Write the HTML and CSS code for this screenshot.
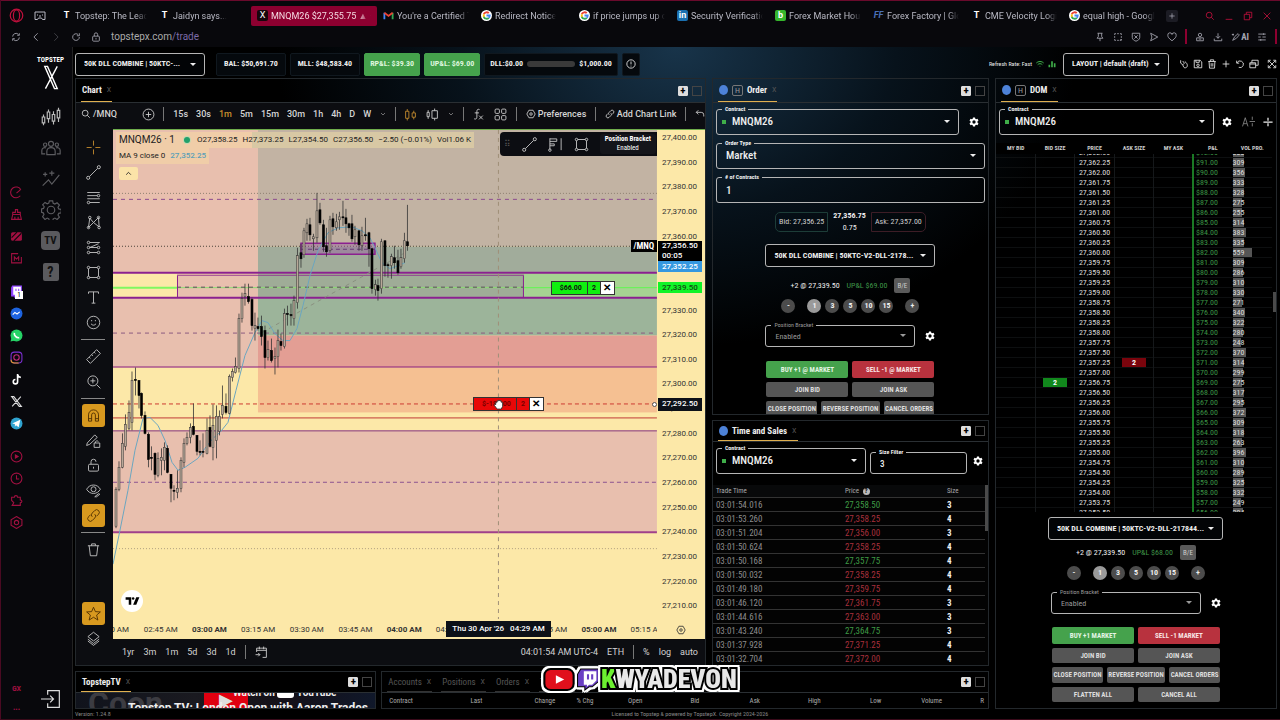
FILE: index.html
```html
<!DOCTYPE html>
<html lang="en">

<head>
    <meta charset="UTF-8">
    <meta name="viewport" content="width=device-width, initial-scale=1.0">
    <title>MNQM26 $27,355.75</title>
    <link rel="stylesheet" href="styles.css">
</head>

<body>
    <!-- icon sprite -->
    <svg class="sprite" xmlns="http://www.w3.org/2000/svg">
        <symbol id="i-opera" viewBox="0 0 24 24"><circle cx="12" cy="12" r="10"/><ellipse cx="12" cy="12" rx="5" ry="9"/></symbol>
        <symbol id="i-island" viewBox="0 0 24 24"><path d="M2 4h20v15h-5l-2-3h-6l-2 3H2z"/><path d="M7 9v2M17 9v2M10 12h4"/></symbol>
        <symbol id="i-search" viewBox="0 0 24 24"><circle cx="10" cy="10" r="7"/><path d="M15 15l6 6"/></symbol>
        <symbol id="i-min" viewBox="0 0 24 24"><path d="M4 20h16"/></symbol>
        <symbol id="i-restore" viewBox="0 0 24 24"><path d="M3 8h13v13H3zM8 8V3h13v13h-5"/></symbol>
        <symbol id="i-x" viewBox="0 0 24 24"><path d="M4 4l16 16M20 4L4 20"/></symbol>
        <symbol id="i-plus" viewBox="0 0 24 24"><path d="M12 4v16M4 12h16"/></symbol>
        <symbol id="i-pluscircle" viewBox="0 0 24 24"><circle cx="12" cy="12" r="10"/><path d="M12 7v10M7 12h10"/></symbol>
        <symbol id="i-sync" viewBox="0 0 24 24"><path d="M4 11a8 8 0 0 1 14-5M20 3v5h-5M20 13a8 8 0 0 1-14 5M4 21v-5h5"/></symbol>
        <symbol id="i-left" viewBox="0 0 24 24"><path d="M16 3l-9 9 9 9"/></symbol>
        <symbol id="i-right" viewBox="0 0 24 24"><path d="M8 3l9 9-9 9"/></symbol>
        <symbol id="i-down" viewBox="0 0 24 24"><path d="M4 8l8 8 8-8"/></symbol>
        <symbol id="i-up" viewBox="0 0 24 24"><path d="M4 16l8-8 8 8"/></symbol>
        <symbol id="i-reload" viewBox="0 0 24 24"><path d="M20 12a8 8 0 1 1-3-6M20 3v6h-6"/></symbol>
        <symbol id="i-undo" viewBox="0 0 24 24"><path d="M4 4v6h6M5 9a8 8 0 1 1 4 11"/></symbol>
        <symbol id="i-back" viewBox="0 0 24 24"><path d="M8 3L3 8l5 5M3 8h12a6 6 0 0 1 6 6v4"/></symbol>
        <symbol id="i-padlock" viewBox="0 0 24 24"><rect x="4" y="10" width="16" height="12" rx="2"/><path d="M8 10V6a4 4 0 0 1 8 0v4M12 14v4"/></symbol>
        <symbol id="i-unlock" viewBox="0 0 24 24"><rect x="4" y="10" width="16" height="11" rx="2"/><path d="M8 10V6a4 4 0 0 1 8 0M12 14v3"/></symbol>
        <symbol id="i-pin" viewBox="0 0 24 24"><path d="M6 3h12M8 3v8l-3 4h14l-3-4V3M12 15v7"/></symbol>
        <symbol id="i-snap" viewBox="0 0 24 24"><path d="M4 7V4h3M10 4h4M17 4h3v3M20 10v4M4 10v4M4 17v3h3M10 20h4M20 17v3h-3z"/></symbol>
        <symbol id="i-shield" viewBox="0 0 24 24"><path d="M3 3h18v10c0 5-5 8-9 9-4-1-9-4-9-9zM8 8l8 8M16 8l-8 8"/></symbol>
        <symbol id="i-send" viewBox="0 0 24 24"><path d="M4 3l17 9-17 9 3-9z"/></symbol>
        <symbol id="i-heart" viewBox="0 0 24 24"><path d="M12 21C4 15 2 12 2 8a5 5 0 0 1 10-2 5 5 0 0 1 10 2c0 4-2 7-10 13z"/></symbol>
        <symbol id="i-user" viewBox="0 0 24 24"><circle cx="12" cy="7" r="4"/><path d="M4 14h16v7H4zM9 17h6"/></symbol>
        <symbol id="i-download" viewBox="0 0 24 24"><path d="M12 3v12M7 10l5 5 5-5M3 16v5h18v-5"/></symbol>
        <symbol id="i-spark" viewBox="0 0 24 24"><path d="M4 20l5-9 8-7 3 3-7 8zM5 4v5M2 6h5"/></symbol>
        <symbol id="i-sliders" viewBox="0 0 24 24"><path d="M3 5h18M3 12h6M13 12h8M3 19h18M16 3v4M9 17v4"/></symbol>
        <symbol id="i-speed" viewBox="0 0 24 24"><path d="M19 18a10 10 0 1 1 1-11M12 13l7-6"/></symbol>
        <symbol id="i-broom" viewBox="0 0 24 24"><path d="M10 3h4v5h5v4H5V8h5zM5 12l-2 9h18l-2-9M9 16v5M15 16v5"/></symbol>
        <symbol id="i-stripes" viewBox="0 0 24 24"><rect x="2" y="4" width="20" height="16" rx="3" fill="currentColor" stroke="none"/><path stroke="#08080c" d="M3 14L13 4M7 20L21 6"/></symbol>
        <symbol id="i-music" viewBox="0 0 24 24"><path d="M21 9v11H3V3h12M8 16V9l4 4 4-4v7"/></symbol>
        <symbol id="i-twitch" viewBox="0 0 24 24"><path fill="#9146ff" stroke="none" d="M4 1h18v14l-6 6h-4l-4 3v-3H2V5z"/><path fill="#fff" stroke="none" d="M6 3h14v11l-4 4h-4l-3 2v-2H6z"/><path stroke="#9146ff" d="M11 7v6M16 7v6"/></symbol>
        <symbol id="i-messenger" viewBox="0 0 24 24"><circle cx="12" cy="12" r="11" fill="#1d63e0" stroke="none"/><path stroke="#fff" d="M5 14l4-4 4 3 5-4"/></symbol>
        <symbol id="i-whatsapp" viewBox="0 0 24 24"><circle cx="12" cy="12" r="11" fill="#25d366" stroke="none"/><path fill="#25d366" stroke="none" d="M1 23l2-8 6 6z"/><path stroke="#fff" stroke-width="3" d="M8 7c-1 5 4 10 9 9"/></symbol>
        <symbol id="i-insta" viewBox="0 0 24 24"><rect x="2" y="2" width="20" height="20" rx="6" stroke="#7b2fd0"/><path d="M2 16c0 4 2 6 6 6h8" stroke="#e8a020"/><circle cx="12" cy="12" r="5" stroke="#c32a7e"/></symbol>
        <symbol id="i-tiktok" viewBox="0 0 24 24"><path stroke="#fff" stroke-width="3" d="M14 2v14a4 4 0 1 1-4-4M14 3c1 4 3 5 6 5"/></symbol>
        <symbol id="i-xsoc" viewBox="0 0 24 24"><path d="M3 3h4l14 18h-4zM20 3L4 21"/></symbol>
        <symbol id="i-telegram" viewBox="0 0 24 24"><circle cx="12" cy="12" r="11" fill="#2fa3d0" stroke="none"/><path fill="#fff" stroke="none" d="M4 12l15-7-3 14-5-4-2 3v-5z"/></symbol>
        <symbol id="i-play" viewBox="0 0 24 24"><circle cx="12" cy="12" r="10"/><path fill="currentColor" d="M10 9l5 3-5 3z"/></symbol>
        <symbol id="i-clock" viewBox="0 0 24 24"><circle cx="12" cy="12" r="10"/><path d="M12 6v7h5"/></symbol>
        <symbol id="i-puzzle" viewBox="0 0 24 24"><path d="M3 6h5c0-4 6-4 6 0h5v5c4 0 4 5 0 5v5H4l3-5-4-4z"/></symbol>
        <symbol id="i-hex" viewBox="0 0 24 24"><path d="M12 1l10 6v10l-10 6-10-6V7z"/><circle cx="12" cy="12" r="4"/></symbol>
        <symbol id="i-nut" viewBox="0 0 24 24"><path d="M7 3h10l5 9-5 9H7l-5-9z"/><circle cx="12" cy="12" r="3"/></symbol>
        <symbol id="i-candles" viewBox="0 0 24 24"><path d="M3 9v3M1.500 12h3v7h-3zM3 19v3M9 3v3M7.500 6h3v8h-3zM9 14v5M15 5v4M13.500 9h3v8h-3zM15 17v4M21 1v3M19.500 4h3v9h-3zM21 13v5"/></symbol>
        <symbol id="i-people" viewBox="0 0 24 24"><circle cx="12" cy="7" r="3"/><circle cx="5" cy="8" r="2"/><circle cx="19" cy="8" r="2"/><path d="M7 20v-4c0-6 10-6 10 0v4zM5 19H1v-4c0-3 3-4 5-3M19 19h4v-4c0-3-3-4-5-3"/></symbol>
        <symbol id="i-insights" viewBox="0 0 24 24"><path d="M2 20l7-7 4 5 9-11M5 4v5M2.500 6.500h5M13 2v6M10 5h6"/></symbol>
        <symbol id="i-cog" viewBox="0 0 24 24"><path d="M10 1h4l.6 3 2 .9 2.700-1.600 2.800 2.800-1.700 2.600.9 2 3 .7v4l-3 .6-.9 2 1.700 2.600-2.800 2.800-2.600-1.700-2 .9-.7 3h-4l-.6-3-2-.9-2.600 1.700L1.900 20l1.700-2.600-.9-2-2-.6v-4l2.300-.7.9-2L2 5.700l2.800-2.800 2.600 1.700 2-.9z"/><circle cx="12" cy="12" r="4.500"/></symbol>
        <symbol id="i-gear" viewBox="0 0 24 24"><path fill="currentColor" stroke="none" fill-rule="evenodd" d="M9.500 1h5l.6 3.300 2 1.200 3.200-1.200 2.500 4.300-2.600 2.200v2.400l2.600 2.200-2.500 4.300-3.200-1.200-2 1.200-.6 3.300h-5l-.6-3.300-2-1.200-3.200 1.200-2.500-4.300 2.600-2.200v-2.400L1.200 8.600l2.500-4.300 3.200 1.200 2-1.200zM12 8a4 4 0 1 0 0 8 4 4 0 0 0 0-8z"/></symbol>
        <symbol id="i-exit" viewBox="0 0 24 24"><path d="M8 7V2h14v20H8v-5M0 12h15M11 8l4 4-4 4"/></symbol>
        <symbol id="i-info" viewBox="0 0 24 24"><circle cx="12" cy="12" r="10"/><path d="M12 6v7M12 16v2"/></symbol>
        <symbol id="i-wifi" viewBox="0 0 24 24"><path stroke-width="3" d="M1 9c6-6 16-6 22 0M5 14c4-4 10-4 14 0M11 19h2"/></symbol>
        <symbol id="i-bars" viewBox="0 0 24 24"><path stroke-width="5" d="M4 22v-8M12 22V4M20 22V10"/></symbol>
        <symbol id="i-plug" viewBox="0 0 24 24"><path d="M4 3v7l5 4 4-4-4-5M9 14l2 5c2 4 9 2 9-3 0-4-2-7-6-10"/></symbol>
        <symbol id="i-save" viewBox="0 0 24 24"><path d="M3 3h14l4 4v14H3zM7 3v5h8V3"/><circle cx="12" cy="15" r="3"/></symbol>
        <symbol id="i-trash" viewBox="0 0 24 24"><path d="M3 6h18M8 6V2h8v4M5 6l1 16h12l1-16M10 10v8M14 10v8"/></symbol>
        <symbol id="i-windows" viewBox="0 0 24 24"><path d="M2 9h14v12H2zM2 12h14M7 9V3h15v12h-6"/></symbol>
        <symbol id="i-expand" viewBox="0 0 24 24"><path d="M3 9V3h6M15 3h6v6M21 15v6h-6M9 21H3v-6M4 4l16 16M20 4L4 20"/></symbol>
        <symbol id="i-candle1" viewBox="0 0 24 24"><path d="M3 6h6v13H3zM6 2v4M6 19v4M15 9h6v8h-6zM18 5v4M18 17v4"/></symbol>
        <symbol id="i-candle2" viewBox="0 0 24 24"><path d="M2 8h4v8H2zM4 4v4M4 16v4M11 5h10v14H11zM16 1v4M16 19v4"/></symbol>
        <symbol id="i-fx" viewBox="0 0 24 24"><path d="M14 3c-4-2-5 1-5 4v10c0 3-2 4-5 3M5 9h8M13 14l7 7M20 14l-7 7"/></symbol>
        <symbol id="i-grid" viewBox="0 0 24 24"><rect x="2" y="2" width="8" height="8" rx="2"/><rect x="14" y="2" width="8" height="8" rx="2"/><rect x="2" y="14" width="8" height="8" rx="2"/><rect x="14" y="14" width="8" height="8" rx="2"/></symbol>
        <symbol id="i-link" viewBox="0 0 24 24"><path d="M10 14a4 4 0 0 1 0-6l4-4a4 4 0 0 1 6 6l-3 3M14 10a4 4 0 0 1 0 6l-4 4a4 4 0 0 1-6-6l3-3"/></symbol>
        <symbol id="i-cross" viewBox="0 0 24 24"><path d="M12 1v8M12 15v8M1 12h8M15 12h8"/></symbol>
        <symbol id="i-trend" viewBox="0 0 24 24"><circle cx="3.500" cy="20.500" r="2.500"/><circle cx="20.500" cy="3.500" r="2.500"/><path d="M5.500 18.500l13-13"/></symbol>
        <symbol id="i-fib" viewBox="0 0 24 24"><path d="M2 4h20M2 9h16M2 14h20M6 20h16"/><circle cx="20" cy="9" r="2"/><circle cx="4" cy="20" r="2"/></symbol>
        <symbol id="i-pattern" viewBox="0 0 24 24"><path d="M4 20L6 5l6 7 8-8 1 15-9-7-8 8"/><circle cx="4" cy="20" r="2"/><circle cx="6" cy="4" r="2"/><circle cx="20" cy="4" r="2"/><circle cx="21" cy="20" r="2"/></symbol>
        <symbol id="i-forecast" viewBox="0 0 24 24"><path d="M6 4h16M6 12h12M6 20h12M6 12l14-6"/><circle cx="4" cy="4" r="2"/><circle cx="4" cy="12" r="2"/><circle cx="4" cy="20" r="2"/><circle cx="20" cy="12" r="2"/><circle cx="20" cy="20" r="2"/></symbol>
        <symbol id="i-rect" viewBox="0 0 24 24"><path d="M4 6v12M20 6v12M6 4h12M6 20h12"/><circle cx="4" cy="4" r="2"/><circle cx="20" cy="4" r="2"/><circle cx="4" cy="20" r="2"/><circle cx="20" cy="20" r="2"/></symbol>
        <symbol id="i-text" viewBox="0 0 24 24"><path d="M4 6V3h16v3M12 3v18M9 21h6"/></symbol>
        <symbol id="i-smile" viewBox="0 0 24 24"><circle cx="12" cy="12" r="10"/><path d="M9 8v2M15 8v2M8 14c2 3 6 3 8 0"/></symbol>
        <symbol id="i-ruler" viewBox="0 0 24 24"><path d="M1 17L17 1l6 6L7 23zM5 13l2 2M9 9l2 2M13 5l2 2"/></symbol>
        <symbol id="i-zoom" viewBox="0 0 24 24"><circle cx="11" cy="11" r="8"/><path d="M17 17l6 6M11 7v8M7 11h8"/></symbol>
        <symbol id="i-magnet" viewBox="0 0 24 24"><path d="M4 21V11a8 8 0 0 1 16 0v10h-5V11a3 3 0 0 0-6 0v10zM4 17h5M15 17h5"/></symbol>
        <symbol id="i-penlock" viewBox="0 0 24 24"><path d="M2 16L14 3l4 4L6 18l-5 2zM15 16v-2a3 3 0 0 1 5 0M13 16h9v7h-9z"/></symbol>
        <symbol id="i-eye" viewBox="0 0 24 24"><path d="M1 10c5-9 17-9 22 0-5 9-17 9-22 0z"/><circle cx="12" cy="10" r="4"/><path d="M14 22l6-5 2 1-5 4z"/></symbol>
        <symbol id="i-bin" viewBox="0 0 24 24"><path d="M3 6h18M9 6V3h6v3M5 6l2 16h10l2-16"/></symbol>
        <symbol id="i-star" viewBox="0 0 24 24"><path d="M12 2l3 7 8 .5-6 5 2 8-7-4.500-7 4.500 2-8-6-5L9 9z"/></symbol>
        <symbol id="i-layers" viewBox="0 0 24 24"><path d="M12 2l9 7-9 7-9-7zM3 13l9 7 9-7M3 16l9 7 9-7"/></symbol>
        <symbol id="i-vp" viewBox="0 0 24 24"><path d="M3 2v18M3 3h11v4H3M3 11h7v3H3M21 2v19"/><circle cx="3" cy="21" r="2"/></symbol>
        <symbol id="i-calendar" viewBox="0 0 24 24"><path d="M3 11V4h18v17h-7M3 8h18M8 1v5M16 1v5M1 16h8M6 13l3 3-3 3"/></symbol>
        <symbol id="i-font" viewBox="0 0 24 24"><path d="M1 21L6 5l5 16M3 16h6M14 12h10M19 3v6M19 15v6"/></symbol>
        <symbol id="i-center" viewBox="0 0 24 24"><path stroke-width="3" d="M1 12h22M12 2v7M12 15v7"/></symbol>
        <symbol id="i-google" viewBox="0 0 24 24"><circle cx="12" cy="12" r="12" fill="#fff" stroke="none"/><path stroke="#ea4335" stroke-width="4" d="M6 9c2-5 8-5 11-2"/><path stroke="#fbbc05" stroke-width="4" d="M6 9v6"/><path stroke="#34a853" stroke-width="4" d="M6 15c2 5 8 5 11 2"/><path stroke="#4285f4" stroke-width="4" d="M12 12h7c0 3-1 4-2 5"/></symbol>
        <symbol id="i-gmail" viewBox="0 0 24 24"><path stroke="#4285f4" stroke-width="4" d="M3 20V6"/><path stroke="#34a853" stroke-width="4" d="M21 20V6"/><path stroke="#ea4335" stroke-width="4" d="M3 6l9 7 9-7"/></symbol>
    </svg>

    <div class="browser">
        <!-- tab strip -->
        <header class="tabstrip">
            <svg class="icon red"><use href="#i-opera"/></svg>
            <svg class="icon island"><use href="#i-island"/></svg>
            <nav class="tabs" aria-label="Tabs">
                <a href="#" class="tab"><span class="fav">T</span><span class="tab-title">Topstep: The Leading</span></a>
                <a href="#" class="tab"><span class="fav">T</span><span class="tab-title">Jaidyn says...</span></a>
                <a href="#" class="tab active"><span class="fav">X</span><span class="tab-title">MNQM26 $27,355.75 ▲ +</span></a>
                <a href="#" class="tab"><svg class="fav"><use href="#i-gmail"/></svg><span class="tab-title">You're a Certified Tr</span></a>
                <a href="#" class="tab"><svg class="fav"><use href="#i-google"/></svg><span class="tab-title">Redirect Notice</span></a>
                <a href="#" class="tab"><svg class="fav"><use href="#i-google"/></svg><span class="tab-title">if price jumps up do</span></a>
                <a href="#" class="tab"><span class="fav in">in</span><span class="tab-title">Security Verification</span></a>
                <a href="#" class="tab"><span class="fav bb">b</span><span class="tab-title">Forex Market Hours</span></a>
                <a href="#" class="tab"><span class="fav ff">FF</span><span class="tab-title">Forex Factory | Glob</span></a>
                <a href="#" class="tab"><span class="fav">T</span><span class="tab-title">CME Velocity Logic</span></a>
                <a href="#" class="tab"><svg class="fav"><use href="#i-google"/></svg><span class="tab-title">equal high - Google</span></a>
            </nav>
            <button class="newtab" aria-label="New tab"><svg class="icon"><use href="#i-plus"/></svg></button>
            <div class="window-buttons">
                <svg class="icon"><use href="#i-search"/></svg>
                <svg class="icon"><use href="#i-min"/></svg>
                <svg class="icon"><use href="#i-restore"/></svg>
                <svg class="icon"><use href="#i-x"/></svg>
            </div>
        </header>

        <!-- address bar -->
        <div class="addressbar">
            <svg class="icon"><use href="#i-sync"/></svg>
            <svg class="icon"><use href="#i-left"/></svg>
            <svg class="icon dim"><use href="#i-right"/></svg>
            <svg class="icon"><use href="#i-reload"/></svg>
            <svg class="icon"><use href="#i-padlock"/></svg>
            <span class="url">topstepx.com<b>/trade</b></span>
            <div class="address-icons">
                <svg class="icon"><use href="#i-pin"/></svg>
                <svg class="icon"><use href="#i-snap"/></svg>
                <svg class="icon"><use href="#i-shield"/></svg>
                <svg class="icon"><use href="#i-send"/></svg>
                <svg class="icon"><use href="#i-heart"/></svg>
                <i class="redbar"></i>
                <svg class="icon"><use href="#i-user"/></svg>
                <svg class="icon"><use href="#i-download"/></svg>
                <span class="ai"><svg class="icon"><use href="#i-spark"/></svg>AI</span>
                <svg class="icon"><use href="#i-sliders"/></svg>
                <i class="redbar"></i>
            </div>
        </div>

        <div class="content">
            <!-- browser sidebar -->
            <aside class="gx-bar">
                <svg class="icon"><use href="#i-speed"/></svg>
                <svg class="icon"><use href="#i-broom"/></svg>
                <svg class="icon"><use href="#i-stripes"/></svg>
                <svg class="icon"><use href="#i-music"/></svg>
                <div class="gx-group">
                    <span class="gx-badge-wrap"><svg class="icon"><use href="#i-twitch"/></svg><span class="gx-badge">1</span></span>
                    <svg class="icon"><use href="#i-messenger"/></svg>
                    <svg class="icon"><use href="#i-whatsapp"/></svg>
                    <svg class="icon"><use href="#i-insta"/></svg>
                    <svg class="icon"><use href="#i-tiktok"/></svg>
                    <svg class="icon white"><use href="#i-xsoc"/></svg>
                    <svg class="icon"><use href="#i-telegram"/></svg>
                </div>
                <div class="gx-group">
                    <svg class="icon"><use href="#i-play"/></svg>
                    <svg class="icon"><use href="#i-clock"/></svg>
                    <svg class="icon"><use href="#i-puzzle"/></svg>
                    <svg class="icon"><use href="#i-hex"/></svg>
                </div>
                <span class="gx-label">GX</span>
                <span class="gx-dots">•••</span>
            </aside>

            <!-- app navigation -->
            <nav class="app-nav" aria-label="Main">
                <div class="logo">TOPSTEP
                    <svg viewBox="0 0 24 36"><path d="M3 2h4l14 32h-4zM21 2L4 34"/></svg>
                </div>
                <svg class="nav-icon on"><use href="#i-candles"/></svg>
                <svg class="nav-icon"><use href="#i-people"/></svg>
                <svg class="nav-icon"><use href="#i-insights"/></svg>
                <svg class="nav-icon"><use href="#i-cog"/></svg>
                <span class="nav-box">TV</span>
                <span class="nav-box help">?</span>
                <svg class="nav-icon exit"><use href="#i-exit"/></svg>
            </nav>

            <div class="app">
                <div class="account-bar">
                    <span class="select-box account">
                        <select aria-label="Account"><option>50K DLL COMBINE | 50KTC-...</option></select>
                    </span>
                    <span class="stat">BAL: $50,691.70</span>
                    <span class="stat">MLL: $48,583.40</span>
                    <span class="stat green">RP&amp;L: $39.30</span>
                    <span class="stat green">UP&amp;L: $69.00</span>
                    <span class="stat dll">DLL:$0.00 <i class="meter"></i> $1,000.00</span>
                    <span class="stat info"><svg class="icon"><use href="#i-info"/></svg></span>
                    <div class="layout-tools">
                        <span class="refresh">Refresh Rate: Fast</span>
                        <svg class="icon go"><use href="#i-wifi"/></svg>
                        <svg class="icon go"><use href="#i-bars"/></svg>
                        <span class="select-box layout">
                            <select aria-label="Layout"><option>LAYOUT | default (draft)</option></select>
                        </span>
                        <svg class="icon"><use href="#i-plug"/></svg>
                        <svg class="icon"><use href="#i-save"/></svg>
                        <svg class="icon"><use href="#i-trash"/></svg>
                        <svg class="icon"><use href="#i-plus"/></svg>
                        <svg class="icon"><use href="#i-undo"/></svg>
                        <svg class="icon"><use href="#i-windows"/></svg>
                        <svg class="icon expand"><use href="#i-expand"/></svg>
                    </div>
                </div>

                <main class="workspace">
                    <div class="left-area">
                        <div class="top-row">
                            <!-- chart panel -->
                            <section class="panel chart-panel">
                                <div class="panel-head">
                                    <span class="panel-tab">Chart <i>X</i></span>
                                    <button class="add" aria-label="Add">+</button><button class="max" aria-label="Maximize"></button>
                                </div>
                                <div class="chart-toolbar">
                                    <button class="tool symbol"><svg class="icon"><use href="#i-search"/></svg>/MNQ</button>
                                    <svg class="icon big"><use href="#i-pluscircle"/></svg>
                                    <i class="vline"></i>
                                    <div class="intervals">
                                        <span>15s</span><span>30s</span><span class="gold">1m</span><span>5m</span><span>15m</span><span>30m</span><span>1h</span><span>4h</span><span>D</span><span>W</span>
                                    </div>
                                    <svg class="icon tiny"><use href="#i-down"/></svg>
                                    <i class="vline"></i>
                                    <svg class="icon big gold"><use href="#i-candle1"/></svg>
                                    <svg class="icon big"><use href="#i-candle2"/></svg>
                                    <svg class="icon tiny"><use href="#i-down"/></svg>
                                    <i class="vline"></i>
                                    <svg class="icon big"><use href="#i-fx"/></svg>
                                    <svg class="icon big"><use href="#i-grid"/></svg>
                                    <i class="vline"></i>
                                    <button class="tool"><svg class="icon"><use href="#i-nut"/></svg>Preferences</button>
                                    <i class="vline"></i>
                                    <button class="tool"><svg class="icon"><use href="#i-link"/></svg>Add Chart Link</button>
                                    <i class="vline"></i>
                                    <svg class="icon"><use href="#i-back"/></svg>
                                </div>
                                <div class="chart-body">
                                    <div class="draw-tools">
                                        <svg class="gold"><use href="#i-cross"/></svg>
                                        <svg><use href="#i-trend"/></svg>
                                        <svg><use href="#i-fib"/></svg>
                                        <svg><use href="#i-pattern"/></svg>
                                        <svg><use href="#i-forecast"/></svg>
                                        <svg><use href="#i-rect"/></svg>
                                        <svg><use href="#i-text"/></svg>
                                        <svg><use href="#i-smile"/></svg>
                                        <hr>
                                        <svg><use href="#i-ruler"/></svg>
                                        <svg><use href="#i-zoom"/></svg>
                                        <hr>
                                        <svg class="filled"><use href="#i-magnet"/></svg>
                                        <svg><use href="#i-penlock"/></svg>
                                        <svg><use href="#i-unlock"/></svg>
                                        <svg><use href="#i-eye"/></svg>
                                        <svg class="filled"><use href="#i-link"/></svg>
                                        <hr>
                                        <svg><use href="#i-bin"/></svg>
                                        <svg class="filled bottom"><use href="#i-star"/></svg>
                                        <svg><use href="#i-layers"/></svg>
                                    </div>
                                    <div class="chart-main">
                                        <div class="chart-view">
                                            <div class="plot">
                                                <svg id="plot" viewBox="113 129 544 490" preserveAspectRatio="none"></svg>
                                                <div class="legend">
                                                    <div class="legend-row"><span class="sym">MNQM26 · 1</span><i class="dot"></i><span>O27,358.25</span><span>H27,373.25</span><span>L27,354.50</span><span>C27,356.50</span><span>−2.50 (−0.01%)</span><span>Vol1.06 K</span></div>
                                                    <div class="legend-row">MA 9 close 0 <b>27,352.25</b></div>
                                                    <button class="collapse" aria-label="Collapse"><svg class="icon"><use href="#i-up"/></svg></button>
                                                </div>
                                                <div class="float-bar">
                                                    <span class="grip">⠿</span>
                                                    <svg><use href="#i-trend"/></svg>
                                                    <svg><use href="#i-vp"/></svg>
                                                    <svg><use href="#i-rect"/></svg>
                                                    <span class="tip">Position Bracket<br><small>Enabled</small></span>
                                                </div>
                                                <span class="sym-tag">/MNQ</span>
                                                <div class="pos-tag win"><span>$66.00</span><span>2</span><button aria-label="Close position">✕</button></div>
                                                <div class="pos-tag loss"><span>$-188.00</span><span>2</span><button aria-label="Cancel stop">✕</button></div>
                                                <svg class="hand" viewBox="0 0 24 24"><path d="M6 12V7h3V4h3V3h3v1h3v3h3v9l-3 6H9l-6-8 1-2z"/></svg>
                                                <span class="ring"></span>
                                                <span class="tv-mark">
                                                    <svg viewBox="0 0 24 16"><path d="M1 2h9v12H6V6H1zM18 2h5l-5 12h-5z"/><circle cx="13" cy="4" r="2"/></svg>
                                                </span>
                                            </div>
                                            <div class="price-axis" id="price-axis">
                                                <span class="price-tag black">27,356.50<br>00:05</span>
                                                <span class="price-tag blue">27,352.25</span>
                                                <span class="price-tag lime">27,339.50</span>
                                                <span class="price-tag cross">27,292.50</span>
                                            </div>
                                        </div>
                                        <div class="time-axis">
                                            <div class="times" id="times"></div>
                                            <span class="time-tag">Thu 30 Apr '26 &nbsp; 04:29 AM</span>
                                            <svg class="icon"><use href="#i-nut"/></svg>
                                        </div>
                                        <div class="range-bar">
                                            <span>1yr</span><span>3m</span><span>1m</span><span>5d</span><span>3d</span><span>1d</span>
                                            <i class="vline"></i>
                                            <svg class="icon big"><use href="#i-calendar"/></svg>
                                            <span class="clock">04:01:54 AM UTC-4</span><span>ETH</span>
                                            <i class="vline"></i>
                                            <span>%</span><span>log</span><span>auto</span>
                                        </div>
                                    </div>
                                </div>
                            </section>

                            <div class="mid-col">
                                <!-- order entry -->
                                <section class="panel order-panel">
                                    <div class="panel-head">
                                        <span class="panel-tab"><i class="ball"></i><em>H</em>Order <i>X</i></span>
                                        <button class="add" aria-label="Add">+</button><button class="max" aria-label="Maximize"></button>
                                    </div>
                                    <div class="form">
                                        <div class="form-row">
                                            <fieldset class="field drop live"><legend><label for="o-contract">Contract</label></legend><select id="o-contract"><option>MNQM26</option></select></fieldset>
                                            <svg class="gear"><use href="#i-gear"/></svg>
                                        </div>
                                        <fieldset class="field drop"><legend><label for="o-type">Order Type</label></legend><select id="o-type"><option>Market</option></select></fieldset>
                                        <fieldset class="field"><legend><label for="o-qty"># of Contracts</label></legend><input id="o-qty" type="text" value="1"></fieldset>
                                        <div class="quote">
                                            <span class="bid">Bid: 27,356.25</span>
                                            <span class="last"><b>27,356.75</b>0.75</span>
                                            <span class="ask">Ask: 27,357.00</span>
                                        </div>
                                    </div>
                                    <div class="trade">
                                        <span class="select-box"><select aria-label="Order account"><option>50K DLL COMBINE | 50KTC-V2-DLL-2178...</option></select></span>
                                        <div class="position"><span>+2 @ 27,339.50</span><span class="up">UP&amp;L $69.00</span><button>B/E</button></div>
                                        <div class="qty"><button>-</button><div><button class="on">1</button><button>3</button><button>5</button><button>10</button><button>15</button></div><button>+</button></div>
                                        <div class="bracket">
                                            <fieldset class="field drop"><legend><label for="o-bracket">Position Bracket</label></legend><select id="o-bracket"><option>Enabled</option></select></fieldset>
                                            <svg class="gear"><use href="#i-gear"/></svg>
                                        </div>
                                        <div class="btn-row main"><button class="buy">BUY +1 @ MARKET</button><button class="sell">SELL -1 @ MARKET</button></div>
                                        <div class="btn-row"><button>JOIN BID</button><button>JOIN ASK</button></div>
                                        <div class="btn-row three"><button>CLOSE POSITION</button><button>REVERSE POSITION</button><button>CANCEL ORDERS</button></div>
                                    </div>
                                </section>

                                <!-- time and sales -->
                                <section class="panel sales-panel">
                                    <div class="panel-head">
                                        <span class="panel-tab"><i class="ball"></i>Time and Sales <i>X</i></span>
                                        <button class="add" aria-label="Add">+</button><button class="max" aria-label="Maximize"></button>
                                    </div>
                                    <div class="form">
                                        <div class="form-row sales-form">
                                            <fieldset class="field drop live"><legend><label for="s-contract">Contract</label></legend><select id="s-contract"><option>MNQM26</option></select></fieldset>
                                            <fieldset class="field filter"><legend><label for="s-size">Size Filter</label></legend><input id="s-size" type="text" value="3"></fieldset>
                                            <svg class="gear"><use href="#i-gear"/></svg>
                                        </div>
                                    </div>
                                    <div class="sales-scroll">
                                        <table class="sales">
                                            <thead><tr><th>Trade Time</th><th>Price <span class="q">?</span></th><th>Size</th></tr></thead>
                                            <tbody id="sales"></tbody>
                                        </table>
                                        <i class="thumb"></i>
                                    </div>
                                </section>
                            </div>
                        </div>

                        <div class="bottom-row">
                            <section class="panel tv-panel">
                                <div class="panel-head">
                                    <span class="panel-tab">TopstepTV <i>X</i></span>
                                    <button class="add" aria-label="Add">+</button><button class="max" aria-label="Maximize"></button>
                                </div>
                                <div class="video">
                                    <span class="ghost">Coon</span>
                                    <span class="video-play">▶</span>
                                    <span class="watch">Watch on <i></i> YouTube</span>
                                    <span class="caption">Topstep TV: London Open with Aaron Trades</span>
                                </div>
                            </section>
                            <section class="panel accounts-panel">
                                <div class="panel-head">
                                    <span class="panel-tab off">Accounts <i>X</i></span>
                                    <span class="panel-tab off">Positions <i>X</i></span>
                                    <span class="panel-tab off">Orders <i>X</i></span>
                                    <span class="panel-tab off">Trades <i>X</i></span>
                                    <button class="add" aria-label="Add">+</button><button class="max" aria-label="Maximize"></button>
                                </div>
                                <table class="quotes">
                                    <thead><tr><th>Contract</th><th>Last</th><th>Change</th><th>% Chg</th><th>Open</th><th>Bid</th><th>Ask</th><th>High</th><th>Low</th><th>Volume</th><th>R</th></tr></thead>
                                </table>
                            </section>
                        </div>
                    </div>

                    <!-- depth of market -->
                    <section class="panel dom-panel">
                        <div class="panel-head">
                            <span class="panel-tab"><i class="ball"></i><em>H</em>DOM <i>X</i></span>
                            <button class="add" aria-label="Add">+</button><button class="max" aria-label="Maximize"></button>
                        </div>
                        <div class="form">
                            <div class="form-row dom-form">
                                <fieldset class="field drop live"><legend><label for="d-contract">Contract</label></legend><select id="d-contract"><option>MNQM26</option></select></fieldset>
                                <svg class="gear"><use href="#i-gear"/></svg>
                                <svg class="icon big grey"><use href="#i-font"/></svg>
                                <svg class="icon"><use href="#i-center"/></svg>
                            </div>
                        </div>
                        <div class="dom-scroll" id="dom-scroll">
                            <table class="dom">
                                <thead><tr><th>MY BID</th><th>BID SIZE</th><th>PRICE</th><th>ASK SIZE</th><th>MY ASK</th><th>P&amp;L</th><th>VOL PRO.</th></tr></thead>
                                <tbody id="dom"></tbody>
                            </table>
                            <i class="thumb"></i>
                        </div>
                        <div class="trade">
                            <span class="select-box"><select aria-label="DOM account"><option>50K DLL COMBINE | 50KTC-V2-DLL-217844...</option></select></span>
                            <div class="position"><span>+2 @ 27,339.50</span><span class="up">UP&amp;L $68.00</span><button>B/E</button></div>
                            <div class="qty"><button>-</button><div><button class="on">1</button><button>3</button><button>5</button><button>10</button><button>15</button></div><button>+</button></div>
                            <div class="bracket">
                                <fieldset class="field drop"><legend><label for="d-bracket">Position Bracket</label></legend><select id="d-bracket"><option>Enabled</option></select></fieldset>
                                <svg class="gear"><use href="#i-gear"/></svg>
                            </div>
                            <div class="btn-row main"><button class="buy">BUY +1 MARKET</button><button class="sell">SELL -1 MARKET</button></div>
                            <div class="btn-row"><button>JOIN BID</button><button>JOIN ASK</button></div>
                            <div class="btn-row three"><button>CLOSE POSITION</button><button>REVERSE POSITION</button><button>CANCEL ORDERS</button></div>
                            <div class="btn-row"><button>FLATTEN ALL</button><button>CANCEL ALL</button></div>
                        </div>
                    </section>
                </main>

                <footer class="footer">
                    <span>Version: 1.24.8</span>
                    <span class="copy">Licensed to Topstep &amp; powered by TopstepX. Copyright 2024-2026</span>
                </footer>
            </div>
        </div>
    </div>

    <!-- stream overlay -->
    <div class="overlay">
        <svg class="yt" viewBox="0 0 30 22"><rect x="1" y="1" width="28" height="20" rx="6"/><path d="M12 7l8 4-8 4z"/></svg>
        <svg class="tw" viewBox="0 0 22 22"><path class="body" d="M4 1h17v12l-6 5h-3l-4 3v-3H1V6z"/><path class="face" d="M7 3h12v9l-4 4h-3l-2 2v-2H7z"/><path class="eyes" d="M11 6v5M15 6v5"/></svg>
        <span><b>K</b>WYADEVON</span>
    </div>

    <script src="script.js"></script>
</body>

</html>
```
FILE: styles.css
```css
* {
    box-sizing: border-box;
}

body {
    margin: 0;
    background: #000;
    color: #eee;
    font-family: 'Roboto Condensed', 'Liberation Sans Narrow', Roboto, sans-serif;
    font-size: 9px;
    line-height: 12px;
    overflow: hidden;
}

button,
input,
select {
    font: inherit;
    color: inherit;
    margin: 0;
    padding: 0;
    border: none;
    background: none;
    outline: none;
}

select {
    appearance: none;
    width: 100%;
}

option {
    color: #000;
}

a {
    color: inherit;
    text-decoration: none;
}

svg {
    fill: none;
    stroke: currentColor;
    stroke-width: 2;
    flex: none;
}

.sprite {
    position: absolute;
    width: 0;
    height: 0;
}

.icon {
    width: 10px;
    height: 10px;
}

.icon.big {
    width: 13px;
    height: 13px;
    stroke-width: 1.6;
}

.icon.tiny {
    width: 6px;
    height: 6px;
}

.gold {
    color: #c98f2e;
}

/* browser frame */
.browser {
    display: flex;
    flex-direction: column;
    height: 100vh;
    background: #08080c;
    border-left: 1px solid #4a0a22;
    border-bottom: 1px solid #3a0a1a;
}

.tabstrip {
    display: flex;
    align-items: center;
    height: 30px;
    flex: none;
    padding: 0 8px;
    border-top: 1px solid #6a0a2c;
    font-family: Roboto, sans-serif;
    color: #b9b9c4;
}

.tabstrip .red {
    width: 15px;
    height: 15px;
    color: #c0103c;
}

.island {
    margin: 0 9px 0 10px;
}

.tabstrip .island {
    width: 12px;
    height: 12px;
}

.tabs {
    display: flex;
    flex: 1;
    height: 100%;
    align-items: center;
    min-width: 0;
}

.tab {
    display: flex;
    align-items: center;
    gap: 3px;
    flex: 0 1 98px;
    height: 20px;
    padding: 0 6px;
    min-width: 0;
}

.tab.active {
    flex-basis: 126px;
    background: #8d0030;
    border-radius: 2px;
    color: #f4d7e0;
    box-shadow: 0 -16px 0 -13px #8d0030;
}

.tab-title {
    overflow: hidden;
    white-space: nowrap;
    mask-image: linear-gradient(90deg, #000 85%, transparent);
}

.fav {
    width: 11px;
    height: 11px;
    flex: none;
    line-height: 11px;
    text-align: center;
    font-weight: bold;
    color: #fff;
    border-radius: 2px;
}

.active .fav {
    background: #16060c;
    font-weight: normal;
}

.fav.in {
    background: #1a6fb0;
}

.fav.bb {
    background: #35b52c;
}

.fav.ff {
    color: #4a70b8;
    font-style: italic;
}

.newtab {
    display: flex;
    background: #1c1c24;
    padding: 2px;
    margin-right: 27px;
    border-radius: 2px;
}

.newtab .icon {
    width: 8px;
    height: 8px;
}

.window-buttons {
    display: flex;
    gap: 9px;
    color: #c0103c;
}

.addressbar {
    display: flex;
    align-items: center;
    gap: 10px;
    height: 17px;
    padding: 0 3px 4px 10px;
    color: #a9a9b4;
    flex: none;
}

.dim {
    opacity: 0.4;
}

.url {
    font: 10px/12px Roboto, sans-serif;
    color: #aaa;
}

.url b {
    font-weight: normal;
    color: #7c6aa8;
}

.address-icons {
    display: flex;
    align-items: center;
    gap: 8px;
    margin-left: auto;
}

.redbar {
    width: 2px;
    height: 15px;
    background: #8d0030;
}

.ai {
    display: flex;
    align-items: center;
    font-weight: bold;
}

.content {
    display: flex;
    flex: 1;
    min-height: 0;
}

/* opera gx sidebar */
.gx-bar {
    display: flex;
    flex-direction: column;
    align-items: center;
    gap: 9px;
    width: 31px;
    flex: none;
    padding: 139px 0 3px;
    color: #a01040;
}

.gx-bar .icon {
    width: 13px;
    height: 13px;
    display: block;
}

.gx-bar .white {
    color: #ddd;
}

.gx-group {
    display: flex;
    flex-direction: column;
    gap: 9px;
    padding-top: 11px;
}

.gx-badge-wrap {
    position: relative;
}

.gx-badge {
    position: absolute;
    left: 5px;
    top: 6px;
    width: 8px;
    height: 8px;
    background: #fff;
    color: #000;
    font-size: 7px;
    line-height: 8px;
    text-align: center;
}

.gx-label {
    margin-top: auto;
    font-size: 8px;
    font-weight: bold;
}

.gx-dots {
    font-size: 7px;
}

/* topstep nav */
.app-nav {
    display: flex;
    flex-direction: column;
    align-items: center;
    gap: 11px;
    width: 41px;
    flex: none;
    padding: 8px 3px 10px 0;
    color: #5c5c60;
    border-right: 1px solid #222;
}

.logo {
    display: flex;
    flex-direction: column;
    align-items: center;
    color: #fff;
    font-size: 7px;
    font-weight: bold;
    line-height: 10px;
    padding-bottom: 6px;
}

.logo svg {
    width: 18px;
    height: 25px;
}

.nav-icon {
    width: 20px;
    height: 20px;
    stroke-width: 1.4;
}

.nav-icon.on {
    color: #bbb;
}

.nav-icon.exit {
    margin-top: auto;
    color: #ddd;
}

.nav-box {
    width: 19px;
    height: 19px;
    border-radius: 4px;
    background: #5a5a5e;
    color: #111;
    font-size: 11px;
    font-weight: bold;
    line-height: 19px;
    text-align: center;
}

.nav-box.help {
    width: 16px;
    height: 18px;
    margin-top: 2px;
    border-radius: 2px;
    font-size: 14px;
}

/* app shell */
.app {
    display: flex;
    flex-direction: column;
    flex: 1;
    min-width: 0;
    padding: 0 3px 0 2px;
    background: radial-gradient(ellipse 400px 300px at 50% 0, #18344a, #07121b 55%, #000 100%);
}

.account-bar {
    display: flex;
    align-items: center;
    gap: 4px;
    height: 31px;
    padding-top: 3px;
    flex: none;
    font-size: 8px;
    font-weight: bold;
}

.select-box {
    position: relative;
    display: flex;
    align-items: center;
    height: 23px;
    padding: 0 18px 0 8px;
    border: 1px solid #b5b5b5;
    border-radius: 3px;
    background: #020406;
    font-size: 8px;
    font-weight: bold;
}

.select-box::after,
.drop::after {
    content: '';
    position: absolute;
    right: 8px;
    border: 3px solid transparent;
    border-top-color: currentColor;
    border-bottom: none;
    pointer-events: none;
}

.account {
    width: 130px;
    margin-right: 7px;
}

.layout {
    width: 106px;
    padding-right: 10px;
    margin: 0 6px 0 3px;
}

.stat {
    display: flex;
    align-items: center;
    height: 23px;
    padding: 0 7px;
    border-radius: 2px;
    border: 1px solid #10181f;
    background: #05090d;
    white-space: nowrap;
}

.stat.green {
    padding: 0 5px;
    background: #45a24c;
    border-color: #45a24c;
    color: #dcf5dc;
}

.stat.dll {
    padding: 0 5px;
}

.meter {
    width: 48px;
    height: 6px;
    margin: 0 4px;
    border-radius: 3px;
    background: #3a3a3a;
}

.stat.info {
    padding: 0 3px;
}

.layout-tools {
    display: flex;
    align-items: center;
    gap: 4px;
    margin-left: auto;
}

.refresh {
    font-size: 6px;
    font-weight: normal;
    white-space: nowrap;
}

.go {
    color: #3fae49;
}

.layout-tools .go {
    width: 8px;
    height: 8px;
}

.expand {
    margin-left: 4px;
}

.workspace {
    display: flex;
    gap: 6px;
    flex: 1;
    min-height: 0;
}

.left-area {
    display: flex;
    flex-direction: column;
    gap: 5px;
    flex: 914;
    min-width: 0;
}

.top-row {
    display: flex;
    gap: 6px;
    flex: 1;
    min-height: 0;
}

.bottom-row {
    display: flex;
    gap: 5px;
    height: 38px;
    flex: none;
}

.panel {
    display: flex;
    flex-direction: column;
    border: 1px solid #23282c;
    overflow: hidden;
    min-width: 0;
    min-height: 0;
}

.chart-panel {
    flex: 631;
}

.mid-col {
    display: flex;
    flex-direction: column;
    gap: 5px;
    flex: 278;
    min-width: 0;
}

.order-panel {
    flex: 338;
}

.sales-panel {
    flex: 246;
}

.tv-panel {
    flex: 301;
}

.accounts-panel {
    flex: 609;
}

.dom-panel {
    flex: 280;
}

.panel-head {
    display: flex;
    align-items: center;
    gap: 4px;
    height: 24px;
    flex: none;
    padding: 0 3px 0 5px;
    border-bottom: 1px solid #2a2f33;
}

.sales-panel .panel-head,
.bottom-row .panel-head {
    height: 21px;
}

.panel-tab {
    display: flex;
    align-items: center;
    gap: 4px;
    height: 100%;
    padding: 0 1px;
    border-bottom: 1px solid #e0b050;
    font-size: 9px;
    font-weight: bold;
    white-space: nowrap;
}

.panel-tab i {
    font-style: normal;
    font-weight: normal;
    font-size: 8px;
    color: #555;
    padding-left: 1px;
}

.panel-tab .ball {
    width: 9px;
    height: 10px;
    border-radius: 50%;
    background: #4d82d8;
}

.panel-tab em {
    font-style: normal;
    font-weight: normal;
    border: 1px solid #777;
    border-radius: 2px;
    line-height: 9px;
    padding: 0 2px;
    font-size: 8px;
    color: #999;
}

.panel-tab.off {
    border-bottom-color: #333;
    color: #555;
    font-weight: normal;
    margin-right: 5px;
}

.add,
.max {
    width: 10px;
    height: 10px;
    border: 1px solid #444;
    line-height: 8px;
}

.add {
    margin-left: auto;
    background: #ddd;
    border-color: #ddd;
    border-radius: 1px;
    color: #000;
    font-size: 11px;
    font-weight: bold;
}

/* chart */
.chart-toolbar {
    display: flex;
    align-items: center;
    justify-content: space-between;
    height: 26px;
    flex: none;
    padding: 0 0 4px 5px;
    background: #0c0d11;
    color: #d4d4d4;
    font-family: Roboto, sans-serif;
    font-weight: 500;
    white-space: nowrap;
    overflow: hidden;
}

.symbol {
    margin-right: 16px;
}

.intervals {
    display: flex;
    gap: 8px;
}

.vline {
    width: 1px;
    height: 14px;
    background: #777;
}

.tool {
    display: flex;
    align-items: center;
    gap: 2px;
}

.chart-body {
    display: flex;
    flex: 1;
    min-height: 0;
}

.draw-tools {
    display: flex;
    flex-direction: column;
    align-items: center;
    width: 37px;
    flex: none;
    padding: 6px 3px 14px 0;
    background: #0c0d11;
    color: #c8c8c8;
}

.draw-tools svg {
    width: 23px;
    height: 23px;
    padding: 4px;
    margin: 1px 0;
    stroke-width: 1.4;
    border-radius: 3px;
}

.draw-tools .filled {
    background: #d8991f;
    color: #4a2c00;
}

.draw-tools .bottom {
    margin-top: auto;
}

.draw-tools hr {
    width: 24px;
    height: 1px;
    margin: 4px 0;
    border: none;
    background: #888;
    flex: none;
}

.chart-main {
    display: flex;
    flex-direction: column;
    flex: 1;
    min-width: 0;
}

.chart-view {
    display: flex;
    flex: 1;
    min-height: 0;
    background: #fce8a8;
    border-top: 1px solid #6fae4c;
}

.plot {
    position: relative;
    flex: 1;
    min-width: 0;
    overflow: hidden;
}

#plot {
    position: absolute;
    width: 100%;
    height: 100%;
}

.legend {
    position: absolute;
    left: 3px;
    top: 2px;
    color: #222;
    font: 8px/12px Roboto, sans-serif;
}

.legend-row {
    display: flex;
    align-items: center;
    gap: 5px;
    width: max-content;
    height: 16px;
    padding: 0 3px;
    background: #f0cda8;
}

.legend-row:first-child {
    background: linear-gradient(90deg, #f0cda8 38%, #d8c8a4 38%);
}

.legend-row .sym {
    font-size: 10px;
}

.legend-row b {
    font-weight: 500;
    color: #5a9fb8;
}

.dot {
    width: 6px;
    height: 6px;
    margin: 0 2px 0 4px;
    border-radius: 50%;
    background: #22a06b;
    box-shadow: 0 0 0 1px #c5d8b0;
}

.collapse {
    display: flex;
    justify-content: center;
    align-items: center;
    width: 19px;
    height: 13px;
    margin: 3px 0 0 3px;
    background: #fbe3a8;
    border-radius: 2px;
}

.collapse .icon {
    width: 7px;
    height: 7px;
    stroke-width: 3;
}

.float-bar {
    position: absolute;
    right: -3px;
    top: 2px;
    display: flex;
    align-items: center;
    gap: 11px;
    height: 24px;
    padding: 0 4px;
    border-radius: 4px;
    background: #0c0d12;
    color: #ccc;
}

.float-bar svg {
    width: 15px;
    height: 15px;
    stroke-width: 1.4;
}

.grip {
    color: #555;
}

.tip {
    padding: 1px 5px;
    background: #14151a;
    border-radius: 3px;
    color: #fff;
    font-size: 7px;
    font-weight: bold;
    line-height: 9px;
    text-align: center;
}

.tip small {
    font-size: 7px;
    font-weight: normal;
}

.sym-tag {
    position: absolute;
    right: 0;
    top: 110px;
    width: 26px;
    height: 12px;
    background: #000;
    color: #fff;
    font-weight: bold;
    text-align: center;
}

.pos-tag {
    position: absolute;
    display: flex;
    height: 14px;
    border: 1px solid #333;
    color: #111;
    font: bold 7px/12px Roboto, sans-serif;
}

.pos-tag span {
    padding: 0 4px;
    border-right: 1px solid #333;
}

.pos-tag span:first-child {
    padding: 0 5px 0 8px;
}

.pos-tag button {
    width: 13px;
    background: #fff;
    color: #000;
    font-size: 10px;
}

.win {
    right: 42px;
    top: 151px;
    background: #10f010;
}

.loss {
    right: 113px;
    top: 267px;
    background: #e80808;
    color: #700;
}

.hand {
    position: absolute;
    left: 380px;
    top: 269px;
    width: 11px;
    height: 11px;
    fill: #fff;
    stroke: #333;
}

.ring {
    position: absolute;
    right: 0;
    top: 272px;
    width: 5px;
    height: 5px;
    border: 1px solid #555;
    border-radius: 50%;
    background: #fff;
}

.tv-mark {
    position: absolute;
    left: 8px;
    bottom: 7px;
    display: flex;
    align-items: center;
    justify-content: center;
    width: 22px;
    height: 22px;
    border-radius: 50%;
    background: #fff;
    color: #000;
}

.tv-mark svg {
    width: 15px;
    height: 10px;
    fill: #000;
    stroke: none;
}

.price-axis {
    position: relative;
    width: 48px;
    flex: none;
    overflow: hidden;
    color: #333;
    font: 8px/12px Roboto, sans-serif;
}

.price-axis .price {
    position: absolute;
    left: 5px;
    transform: translateY(-50%);
}

.price-tag {
    position: absolute;
    z-index: 1;
    left: 1px;
    width: 44px;
    padding-left: 4px;
    color: #fff;
    font-weight: 500;
}

.price-tag.black {
    top: 111px;
    height: 21px;
    line-height: 10px;
    background: #000;
}

.price-tag.blue {
    top: 131px;
    height: 11px;
    line-height: 11px;
    background: #3598e0;
}

.price-tag.lime {
    top: 152px;
    height: 11px;
    line-height: 11px;
    background: #10f428;
    color: #134a13;
}

.price-tag.cross {
    top: 268px;
    height: 13px;
    background: #0d1118;
}

.time-axis {
    position: relative;
    display: flex;
    align-items: center;
    height: 20px;
    flex: none;
    padding-top: 2px;
    background: #fce8a8;
    color: #333;
    font: 8px/12px Roboto, sans-serif;
}

.time-axis .icon {
    margin: 0 19px;
}

.times {
    position: relative;
    flex: 1;
    height: 12px;
    overflow: hidden;
}

.times span {
    position: absolute;
    transform: translateX(-50%);
    white-space: nowrap;
}

.time-tag {
    position: absolute;
    left: 333px;
    top: 2px;
    width: 105px;
    height: 16px;
    background: #0d1118;
    color: #fff;
    font-weight: 500;
    line-height: 16px;
    text-align: center;
}

.range-bar {
    display: flex;
    align-items: center;
    gap: 9px;
    height: 26px;
    flex: none;
    padding: 0 7px 0 9px;
    background: #0c0d11;
    color: #d4d4d4;
    font-family: Roboto, sans-serif;
}

.clock {
    margin-left: auto;
}

/* forms */
.form {
    display: flex;
    flex-direction: column;
    gap: 4px;
    padding: 2px 3px 0;
}

.form-row {
    display: flex;
    align-items: center;
}

.field {
    position: relative;
    flex: 1;
    min-width: 0;
    height: 30px;
    margin: 0;
    padding: 0 9px;
    border: 1px solid #b5b5b5;
    border-radius: 3px;
}

.field legend {
    margin-left: -4px;
    padding: 0 3px;
    font-size: 6px;
    font-weight: bold;
    line-height: 8px;
}

.field label {
    display: block;
}

.field select,
.field input {
    display: block;
    width: 100%;
    height: 18px;
    font-size: 11px;
    font-weight: 500;
}

.form > .field {
    flex: none;
}

.drop::after {
    top: 7px;
}

.live select {
    padding-left: 6px;
}

.live::before {
    content: '';
    position: absolute;
    left: 5px;
    top: 7px;
    width: 4px;
    height: 4px;
    background: #3fae49;
}

.gear {
    width: 10px;
    height: 10px;
    color: #fff;
    margin: 3px 6px 0 10px;
}

.quote {
    display: flex;
    justify-content: center;
    align-items: center;
    gap: 5px;
    padding-top: 3px;
    font-size: 8px;
}

.bid,
.ask {
    padding: 3px;
    border: 1px solid #1d3d38;
    border-radius: 5px 0 0 5px;
    color: #ccc;
}

.ask {
    border-color: #3d1d26;
    border-radius: 0 5px 5px 0;
}

.last {
    display: flex;
    flex-direction: column;
    align-items: center;
}

.trade {
    display: flex;
    flex-direction: column;
    width: 170px;
    flex: none;
    margin: 10px auto 0;
}

.position {
    display: flex;
    align-items: center;
    justify-content: center;
    gap: 7px;
    margin-top: 11px;
    font-size: 8px;
}

.up {
    color: #3f9548;
}

.position button {
    width: 16px;
    height: 15px;
    border-radius: 2px;
    background: #5a5a5a;
    font-size: 7px;
    color: #ccc;
}

.qty {
    display: flex;
    justify-content: center;
    gap: 12px;
    margin-top: 6px;
}

.qty div {
    display: flex;
    gap: 4px;
}

.qty button {
    width: 14px;
    height: 14px;
    border-radius: 50%;
    background: #4c4c4c;
    font-size: 8px;
    font-weight: bold;
}

.qty .on {
    background: #9a9a9a;
}

.bracket {
    display: flex;
    align-items: center;
    margin: 8px 0 14px;
    color: #999;
}

.bracket .field {
    height: 26px;
    flex: none;
    width: 150px;
}

.bracket legend {
    font-weight: normal;
}

.bracket .field select {
    height: 15px;
    font-size: 8px;
    font-weight: normal;
}

.bracket .drop::after {
    top: 5px;
}

.btn-row {
    display: flex;
    gap: 4px;
    margin: 0 1px 4px;
}

.btn-row button {
    flex: 1;
    height: 15px;
    border-radius: 2px;
    background: #555;
    color: #ddd;
    font-size: 7px;
    font-weight: bold;
    white-space: nowrap;
}

.btn-row.three button {
    flex: auto;
    height: 16px;
}

.btn-row.main button {
    height: 17px;
}

.btn-row.main .buy {
    background: #45a24c;
    color: #e4f5e4;
}

.btn-row.main .sell {
    background: #b8323e;
    color: #f8e4e4;
}

/* tables */
table {
    border-collapse: collapse;
    table-layout: fixed;
    width: 100%;
}

th,
td {
    padding: 0;
    text-align: left;
    font-weight: normal;
}

.sales-form .filter {
    flex: 0 0 97px;
    height: 26px;
    margin: 4px 0 0 4px;
}

.sales-form .filter input {
    height: 15px;
    font-size: 9px;
}

.sales-form .gear {
    margin: 4px 2px 0 6px;
}

.sales-scroll {
    position: relative;
    flex: 1;
    min-height: 0;
    margin-top: 11px;
    padding-right: 3px;
    overflow: hidden;
    background: #030303;
}

.sales th {
    height: 12px;
    padding-left: 3px;
    font-size: 7px;
    color: #aaa;
    background: #08090a;
}

.sales td {
    height: 14px;
    padding-left: 3px;
    border-top: 1px solid #333;
    font-size: 9px;
    line-height: 12px;
    color: #8c8c8c;
}

.sales th:nth-child(1) {
    width: 129px;
}

.sales th:nth-child(2) {
    width: 102px;
}

.sales .g {
    color: #3f9a45;
}

.sales .r {
    color: #a8303c;
}

.sales td:nth-child(3) {
    color: #eee;
    font-weight: bold;
}

.q {
    display: inline-block;
    width: 7px;
    height: 7px;
    margin-left: 2px;
    border-radius: 50%;
    background: #bbb;
    color: #000;
    line-height: 7px;
    text-align: center;
    font-weight: bold;
}

.thumb {
    position: absolute;
    top: 0;
    right: 0;
    width: 3px;
    height: 46px;
    background: #4a4a4a;
}

.dom-form .gear {
    margin: 3px 8px 0;
}

.dom-form .icon {
    margin: 3px 0 0 2px;
}

.grey {
    color: #888;
}

.dom-form .icon:last-child {
    margin-left: 8px;
}

.dom-scroll {
    position: relative;
    flex: 1;
    min-height: 0;
    margin-top: 8px;
    padding-right: 4px;
    overflow: hidden;
}

.dom th {
    position: sticky;
    z-index: 1;
    top: 0;
    height: 11px;
    background: #000;
    border-bottom: 1px solid #333;
    font-size: 6px;
    font-weight: bold;
    line-height: 10px;
    text-align: center;
    color: #ccc;
}

.dom td {
    height: 10px;
    border-top: 1px solid #0d0f10;
    border-right: 1px solid #15181a;
    font-size: 8px;
    line-height: 9px;
    text-align: center;
    color: #ddd;
}

.dom td:nth-child(6) {
    padding-left: 2px;
    border-left: 2px solid #1a7a24;
    border-right: none;
    text-align: left;
    color: #3c9444;
}

.dom td:nth-child(7) {
    border-right: none;
    text-align: left;
}

.vol {
    display: block;
    height: 9px;
    background: #555;
    overflow: visible;
}

.hit {
    display: block;
    width: 24px;
    height: 9px;
    margin: 0 auto;
    background: #11881c;
    color: #fff;
    font-weight: bold;
}

.hit.ask-hit {
    background: #7a040c;
}

.dom-scroll .thumb {
    top: 156px;
    height: 20px;
}

.dom-panel .trade {
    margin-top: 5px;
    padding-bottom: 2px;
}

.dom-panel .select-box {
    margin: 0 -2px 0 -3px;
}

.dom-panel .position {
    margin-top: 5px;
}

.dom-panel .bracket {
    margin-bottom: 13px;
}

/* bottom panels */
.video {
    position: relative;
    flex: 1;
    overflow: hidden;
    background: linear-gradient(90deg, #10131c, #1a1a20 40%, #141018 70%, #10182a);
    font-family: Roboto, sans-serif;
    white-space: nowrap;
}

.ghost,
.video-play,
.watch,
.caption {
    position: absolute;
}

.ghost {
    left: 12px;
    top: -3px;
    font-size: 32px;
    font-weight: bold;
    line-height: 26px;
    color: #3c3c42;
}

.video-play {
    left: 128px;
    top: 0;
    width: 44px;
    height: 16px;
    background: #e00010;
    color: #ddd;
    font-size: 18px;
    line-height: 14px;
    text-align: center;
}

.watch {
    left: 157px;
    top: -6px;
    font-size: 10px;
    font-weight: bold;
}

.watch i {
    display: inline-block;
    width: 17px;
    height: 9px;
    border-radius: 3px;
    background: #fff;
    vertical-align: middle;
}

.caption {
    left: 52px;
    top: 8px;
    font-size: 12px;
    font-weight: bold;
    line-height: 14px;
}

.quotes th {
    padding: 2px 4px 0 0;
    font-size: 7px;
    text-align: right;
    color: #aaa;
}

.quotes th:first-child {
    width: 41px;
    text-align: left;
    padding-left: 7px;
}

.quotes th:nth-child(2) {
    width: 63px;
}

.quotes th:nth-child(3) {
    width: 73px;
}

.quotes th:nth-child(4) {
    width: 38px;
}

.quotes th:nth-child(5) {
    width: 49px;
}

.quotes th:nth-child(6) {
    width: 57px;
}

.quotes th:last-child {
    width: 42px;
}

.footer {
    display: flex;
    height: 10px;
    flex: none;
    font-size: 6px;
    line-height: 9px;
    color: #888;
}

.copy {
    margin: 0 auto;
    padding-right: 8px;
}

/* stream overlay */
.overlay {
    position: fixed;
    left: 543px;
    bottom: 26px;
    display: flex;
    align-items: center;
    gap: 1px;
    height: 30px;
}

.overlay svg {
    height: 23px;
    stroke: none;
    overflow: visible;
    filter: drop-shadow(2px 0 0 #fff) drop-shadow(-2px 0 0 #fff) drop-shadow(0 2px 0 #fff) drop-shadow(0 -2px 0 #fff);
}

.overlay .yt {
    width: 32px;
    fill: #e0101c;
    stroke: #000;
}

.overlay .yt path {
    fill: #fff;
    stroke: none;
}

.overlay .tw {
    width: 24px;
}

.tw .body {
    fill: #6a3fc4;
    stroke: #000;
    stroke-width: 1;
}

.tw .face {
    fill: #fff;
}

.tw .eyes {
    stroke: #6a3fc4;
}

.overlay span {
    color: #e8e8e8;
    font-size: 26px;
    font-weight: 900;
    line-height: 30px;
    -webkit-text-stroke: 4px #000;
    paint-order: stroke fill;
    filter: drop-shadow(2px 0 0 #fff) drop-shadow(-2px 0 0 #fff) drop-shadow(0 2px 0 #fff) drop-shadow(0 -2px 0 #fff);
}

.overlay b {
    font-weight: 900;
    color: #6cf030;
}
```
FILE: script.js
```javascript
// background zones: x, y, width, height, color
const zones = [
    [113, 129, 145, 143, '#e8bfae'],
    [113, 297, 145, 70, '#e8bfae'],
    [258, 129, 399, 117, '#c2b3a3'],
    [258, 246, 399, 26, '#a1ac9b'],
    [258, 272, 399, 25, '#a6d392'],
    [258, 297, 399, 38, '#9cb49a'],
    [258, 335, 399, 32, '#e39e94'],
    [258, 367, 399, 45, '#f5c092'],
    [113, 431, 544, 101, '#e8bfae'],
    [177, 275, 81, 22, '#e8bfae'],
    [258, 275, 266, 22, '#9fac97']
];

// horizontal lines: y, x1, x2, color, width, dash
const lines = [
    [192.5, 113, 657, '#8d8070', 1, '1 2'],
    [198.5, 113, 657, '#8a4a8e', 1, '4 4'],
    [245.5, 113, 657, '#4a4238', 1, '1 2'],
    [272, 113, 657, '#8b2090', 2, ''],
    [274.5, 177, 524, '#8b2090', 1, ''],
    [287, 113, 177, '#80f860', 2, ''],
    [287, 177, 524, '#8ae070', 1, ''],
    [287, 524, 657, '#60f850', 1, ''],
    [286.5, 177, 524, '#5a4a58', 1, '4 4'],
    [297, 113, 657, '#8b2090', 2, ''],
    [332.5, 113, 657, '#8c5a80', 1, '4 4'],
    [366.5, 113, 657, '#8b1f80', 1, ''],
    [403.5, 113, 657, '#cc3a30', 1, '4 3'],
    [417.5, 113, 657, '#c03a38', 1, ''],
    [430.5, 113, 657, '#7c2580', 1, ''],
    [482, 113, 657, '#8c5290', 1, '4 3'],
    [532, 113, 657, '#a0408a', 2, ''],
    [548.5, 113, 657, '#b0a080', 1, '1 2']
];

// candles: x, high, low, body top, body bottom, filled
const candles = [
    [116, 487, 528, 489, 526, 0], [119, 461, 491, 467, 489, 0], [122.5, 433, 468, 443, 467, 0], [125.5, 414, 450, 424, 446, 0],
    [129, 400, 430, 412, 428, 0], [132, 371, 430, 380, 422, 0], [135.500, 367, 395, 379, 380, 1], [139, 380, 408, 380, 395, 1],
    [141.5, 392, 418, 393, 415, 1], [145, 411, 434, 415, 433, 1], [148.5, 432, 467, 434, 459, 1], [151.5, 446, 470, 457, 458, 1],
    [155, 452, 480, 453, 474, 1], [158, 452, 477, 458, 475, 0], [161.5, 448, 475, 457, 460, 0], [164.5, 442, 470, 447, 460, 0],
    [167.5, 445, 473, 448, 472, 1], [171, 474, 502, 474, 488, 1], [174, 485, 500, 490, 491, 1], [177.5, 470, 498, 488, 492, 0],
    [181, 457, 492, 460, 488, 0], [184, 438, 467, 443, 462, 0], [187, 432, 445, 437, 443, 0], [190.5, 423, 443, 427, 437, 0],
    [193.5, 403, 435, 426, 434, 1], [197, 435, 455, 435, 451, 1], [200, 440, 455, 451, 452, 1], [203, 433, 457, 451, 452, 1],
    [207, 418, 454, 430, 453, 0], [210, 415, 447, 427, 446, 1], [213, 404, 460, 425, 447, 0], [216.5, 405, 458, 416, 440, 0],
    [219.5, 410, 435, 416, 431, 0], [222.5, 385, 418, 405, 414, 0], [226, 393, 414, 406, 412, 1], [229.5, 374, 414, 376, 413, 0],
    [232.5, 368, 381, 371, 377, 0], [235.5, 357, 373, 366, 372, 0], [239, 313, 372, 318, 368, 0], [242, 292, 322, 298, 318, 0],
    [245, 283, 305, 293, 296, 0], [248.5, 283, 303, 296, 301, 1], [252, 297, 330, 299, 325, 1], [255, 312, 340, 325, 328, 0],
    [258, 317, 330, 326, 328, 1], [261.5, 315, 345, 326, 336, 1], [265, 325, 368, 330, 357, 1], [268, 340, 360, 349, 357, 0],
    [271.5, 338, 362, 350, 360, 1], [275, 347, 374, 356, 358, 0], [278, 329, 367, 340, 356, 0], [281, 333, 350, 341, 345, 1],
    [284.5, 308, 348, 313, 346, 0], [287.5, 305, 325, 313, 314, 1], [291, 303, 325, 314, 315, 1], [294, 295, 325, 300, 318, 0],
    [297.5, 247, 308, 255, 302, 0], [301, 243, 267, 252, 258, 1], [304, 227, 257, 230, 254, 0], [307, 218, 240, 223, 232, 0],
    [310, 217, 240, 224, 234, 1], [313.5, 233, 250, 236, 238, 0], [317, 192, 242, 210, 237, 0], [320, 202, 224, 209, 222, 1],
    [323.5, 219, 251, 224, 246, 1], [326.5, 227, 256, 245, 251, 1], [330, 215, 252, 219, 250, 0], [333, 212, 234, 218, 226, 1],
    [336.5, 213, 230, 221, 227, 0], [339.5, 211, 229, 216, 219, 0], [343, 200, 225, 216, 217, 1], [346, 208, 232, 217, 223, 1],
    [349, 222, 235, 223, 227, 1], [352, 214, 241, 223, 238, 1], [355, 225, 244, 229, 236, 0], [359, 230, 250, 230, 244, 1],
    [362, 226, 250, 235, 245, 0], [365.5, 217, 240, 234, 235, 1], [369, 231, 266, 232, 248, 1], [372, 247, 293, 248, 288, 1],
    [375.5, 279, 295, 284, 289, 0], [378, 278, 300, 285, 290, 1], [381.5, 238, 293, 241, 288, 0], [385, 240, 276, 240, 265, 1],
    [388, 262, 277, 264, 265, 1], [391.5, 253, 278, 256, 265, 0], [394.5, 245, 268, 257, 262, 1], [398, 249, 274, 260, 272, 1],
    [401, 248, 268, 257, 266, 0], [404.5, 232, 262, 240, 258, 0], [407.5, 204, 250, 241, 245, 1]
];

const ma = '113,564 120,530 128,490 135,450 143,418 150,417 158,425 165,440 172,462 178,470 185,467 198,458 205,448 213,438 220,432 228,422 236,390 245,355 255,332 262,320 268,322 275,333 283,340 290,340 297,328 303,305 310,275 318,250 328,232 338,227 352,226 362,230 370,237 375,247 382,262 390,268 398,265 405,262';

function drawPlot() {
    let out = '';
    zones.forEach(([x, y, w, h, c]) => {
        out += `<rect x="${x}" y="${y}" width="${w}" height="${h}" fill="${c}" stroke="none"/>`;
    });
    lines.forEach(([y, x1, x2, c, w, dash]) => {
        out += `<path d="M${x1} ${y}H${x2}" stroke="${c}" stroke-width="${w}" stroke-dasharray="${dash}"/>`;
    });
    out += '<path d="M177.500 275V297M523.500 275V297" stroke="#8b2090" stroke-width="1"/>';
    out += '<rect x="301" y="242.500" width="74" height="11" fill="#9a60a0" fill-opacity=".45" stroke="#8b2090" stroke-width="1.500"/>';
    out += '<path d="M301 248.500H375" stroke="#6a3a78" stroke-width="1" stroke-dasharray="4 3"/>';
    out += '<path d="M262 332L405 252" stroke="#8a9080" stroke-width="1" stroke-dasharray="4 4"/>';
    out += '<path d="M498.500 129V619" stroke="#a09078" stroke-width="1" stroke-dasharray="4 4"/>';
    out += `<polyline points="${ma}" stroke="#6aa6c0" stroke-width="1"/>`;
    candles.forEach(([x, hi, lo, top, bottom, filled]) => {
        out += `<path d="M${x} ${hi}V${lo}" stroke="#333" stroke-width=".8"/>`;
        out += `<rect x="${x - 1}" y="${top}" width="2" height="${bottom - top}" fill="${filled ? '#000' : '#b8a898'}" stroke="${filled ? '#000' : '#333'}" stroke-width="${filled ? 0.6 : 0.5}"/>`;
    });
    document.getElementById('plot').innerHTML = out;
}

// price labels, the ones under a tag are skipped
function drawAxes() {
    const axis = document.getElementById('price-axis');
    for (let p = 27400; p >= 27210; p -= 10) {
        if (p === 27350 || p === 27340) continue;
        const el = document.createElement('span');
        el.className = 'price';
        el.textContent = p.toLocaleString('en-US') + '.00';
        el.style.top = ((8 + (27400 - p) * 2.47) / 490 * 100) + '%';
        axis.appendChild(el);
    }

    // 04:30 sits under the crosshair tag
    const times = ['02:30 AM', '02:45 AM', '03:00 AM', '03:15 AM', '03:30 AM', '03:45 AM', '04:00 AM', '04:15 AM', '', '04:45 AM', '05:00 AM', '05:15 AM'];
    times.forEach((t, i) => {
        const el = document.createElement('span');
        el.textContent = t;
        el.style.left = ((-1 + i * 48.7) / 544 * 100) + '%';
        if (t.includes(':00')) el.style.fontWeight = 'bold';
        document.getElementById('times').appendChild(el);
    });
}

const sales = [
    ['03:01:54.016', '27,358.50', 3, 'g'],
    ['03:01:53.260', '27,358.25', 4, 'r'],
    ['03:01:51.204', '27,356.00', 3, 'r'],
    ['03:01:50.624', '27,358.25', 4, 'r'],
    ['03:01:50.168', '27,357.75', 4, 'g'],
    ['03:01:50.032', '27,358.25', 4, 'r'],
    ['03:01:49.180', '27,359.75', 4, 'r'],
    ['03:01:46.120', '27,361.75', 3, 'r'],
    ['03:01:44.616', '27,363.00', 3, 'r'],
    ['03:01:43.240', '27,364.75', 3, 'g'],
    ['03:01:37.928', '27,371.25', 4, 'r'],
    ['03:01:32.704', '27,372.00', 4, 'r']
];

function drawSales() {
    document.getElementById('sales').innerHTML = sales.map(([time, price, size, c]) =>
        `<tr><td>${time}</td><td class="${c}">${price}</td><td>${size}</td></tr>`).join('');
}

const volumes = [333, 309, 356, 333, 328, 275, 255, 314, 383, 335, 559, 309, 286, 310, 330, 271, 340, 322, 280, 248, 370, 314, 299, 275, 317, 295, 372, 309, 318, 263, 396, 310, 289, 325, 332, 249, 294];

function drawDom() {
    let out = '';
    volumes.forEach((v, i) => {
        const price = 27362.5 - i * 0.25;
        const bid = price === 27356.75 ? '<span class="hit">2</span>' : '';
        const ask = price === 27357.25 ? '<span class="hit ask-hit">2</span>' : '';
        const label = price.toLocaleString('en-US', { minimumFractionDigits: 2 });
        out += `<tr><td></td><td>${bid}</td><td>${label}</td><td>${ask}</td><td></td><td>$${92 - i}.00</td><td><span class="vol" style="width:${Math.round(v / 559 * 19)}px">${v}</span></td></tr>`;
    });
    document.getElementById('dom').innerHTML = out;
    document.getElementById('dom-scroll').scrollTop = 7;
}

drawPlot();
drawAxes();
drawSales();
drawDom();
```
